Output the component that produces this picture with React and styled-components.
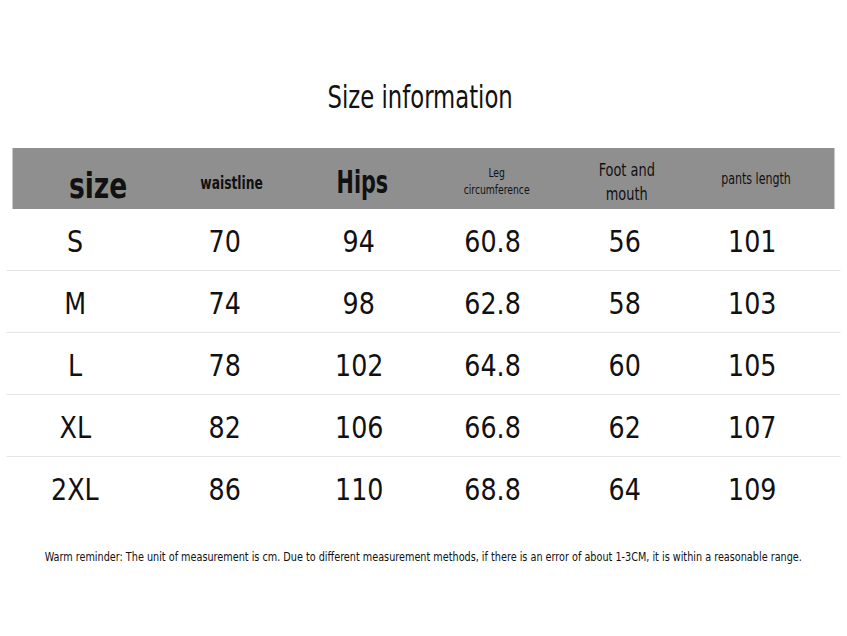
import React from 'react';
import styled, { createGlobalStyle } from 'styled-components';

const GlobalStyle = createGlobalStyle`
  html, body {
    margin: 0;
    padding: 0;
    background: #fff;
  }
  body {
    font-family: "DejaVu Sans Condensed", "DejaVu Sans", sans-serif;
    font-stretch: condensed;
    color: #111;
  }
`;

// column widths chosen so that the value columns centre where the chart's do
const cols = '126px 174px 94px 174px 90px 164px';

const sizes = [
  ['S', 70, 94, '60.8', 56, 101],
  ['M', 74, 98, '62.8', 58, 103],
  ['L', 78, 102, '64.8', 60, 105],
  ['XL', 82, 106, '66.8', 62, 107],
  ['2XL', 86, 110, '68.8', 64, 109],
];

function App() {
  return (
    <>
      <GlobalStyle />
      <Page>
        <Title><Narrow $x={0.79}>Size information</Narrow></Title>
        <Table>
          <HeadRow>
            <HeadCell $size={36} $weight={700} $dx={23} $dy={8}><Narrow>size</Narrow></HeadCell>
            <HeadCell $size={17.5} $weight={700} $dx={7} $dy={5}><Narrow $x={0.78}>waistline</Narrow></HeadCell>
            <HeadCell $size={32} $weight={700} $dx={3} $dy={4}><Narrow $x={0.72}>Hips</Narrow></HeadCell>
            <HeadCell $size={12.5} $dx={4} $dy={3}><Narrow>Leg<br />circumference</Narrow></HeadCell>
            <HeadCell $size={17.5} $weight={500} $dx={2} $dy={4}><Narrow>Foot and<br />mouth</Narrow></HeadCell>
            <HeadCell $size={15} $dx={4} $dy={1}><Narrow>pants length</Narrow></HeadCell>
          </HeadRow>
          {sizes.map((r, i) => (
            <Row key={r[0]} $last={i === sizes.length - 1}>
              {r.map((v, j) => (
                <Cell key={j}><Narrow $x={0.94}>{v}</Narrow></Cell>
              ))}
            </Row>
          ))}
        </Table>
        <Note>
          <Narrow $x={0.86}>
            Warm reminder: The unit of measurement is cm. Due to different measurement methods, if there is an error of about 1-3CM, it is within a reasonable range.
          </Narrow>
        </Note>
      </Page>
    </>
  );
}

export default App;

const Page = styled.div`
  width: 847px;
  height: 636px;
  display: flex;
  flex-direction: column;
  align-items: center;
  padding-top: 80px;
  box-sizing: border-box;
`;

const Narrow = styled.span`
  display: inline-block;
  transform: scaleX(${p => p.$x || 0.82});
  transform-origin: center;
  white-space: nowrap;
`;

const Title = styled.h1`
  margin: 0 0 33px 0;
  font-size: 32px;
  font-weight: 400;
  line-height: 35px;
  color: #111;
  transform: translateX(-3px);
`;

const Table = styled.div`
  width: 822px;
  display: flex;
  flex-direction: column;
  transform: translateX(-0.5px);
`;

const HeadRow = styled.div`
  display: grid;
  grid-template-columns: ${cols};
  height: 61px;
  background: #8f8f8f;
  align-items: center;
`;

const HeadCell = styled.div`
  text-align: center;
  font-size: ${p => p.$size}px;
  font-weight: ${p => p.$weight || 400};
  line-height: 1.35;
  color: #111;
  transform: translate(${p => p.$dx}px, ${p => p.$dy}px);
`;

const Row = styled.div`
  display: grid;
  grid-template-columns: ${cols};
  height: 62px;
  align-items: center;
  border-bottom: 1px solid ${p => (p.$last ? 'transparent' : '#e6e6e6')};
  margin: 0 -6px;
  padding: 4px 6px 0;
  box-sizing: border-box;
`;

const Cell = styled.div`
  text-align: center;
  font-size: 30px;
  color: #111;
`;

const Note = styled.p`
  margin: 30px 0 0 0;
  font-size: 12.5px;
  color: #111;
  white-space: nowrap;
`;
